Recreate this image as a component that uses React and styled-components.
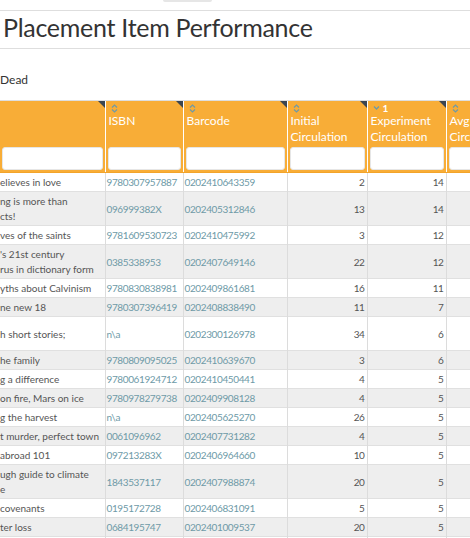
import React from "react";
import styled, { createGlobalStyle } from "styled-components";

const GlobalStyle = createGlobalStyle`
  html, body { margin: 0; padding: 0; background: #fff; overflow: hidden; }
  body { font-family: Lato, "Noto Sans", sans-serif; color: #444; }
  * { box-sizing: border-box; }
`;

const Page = styled.div`
  width: 470px;
  height: 538px;
  overflow: hidden;
`;

const TopStub = styled.div`
  margin-left: 163px;
  width: 49px;
  height: 2px;
  background: #e6e6e6;
  border-radius: 0 0 3px 3px;
`;

const TitleBar = styled.div`
  margin-top: 8px;
  border-top: 1px solid #dedede;
  border-bottom: 1px solid #dedede;
  padding: 0 0 4px 3px;
`;

const Title = styled.h1`
  margin: 0;
  font-family: Lato, sans-serif;
  font-weight: 400;
  font-size: 25px;
  letter-spacing: -0.28px;
  line-height: 33px;
  color: #333;
  white-space: nowrap;
`;

const Status = styled.div`
  margin-top: 23px;
  font-size: 12px;
  line-height: 16px;
  color: #333;
`;

const TableClip = styled.div`
  margin-top: 12px;
  overflow: hidden;
  border-top: 1px solid #dedede;
`;

const Table = styled.table`
  border-collapse: collapse;
  table-layout: fixed;
  width: 526px;
  font-size: 10px;
`;

const HeadCell = styled.th`
  position: relative;
  background: #f8ad37;
  vertical-align: top;
  text-align: left;
  padding: 0 2px 2px;
  border-left: 1px solid rgba(255, 255, 255, 0.55);
  border-bottom: 1px solid #f3a42a;
  font-weight: 400;
  &:first-child { border-left: none; }
`;

const Corner = styled.span`
  position: absolute;
  top: 0;
  right: 0;
  width: 0;
  height: 0;
  border-top: 7px solid #3b4550;
  border-left: 7px solid transparent;
`;

const SortRow = styled.div`
  height: 12px;
  display: flex;
  align-items: center;
  gap: 3px;
  padding-left: 3px;
  padding-top: 2px;
`;

const SortRank = styled.span`
  color: #fff;
  font-weight: 700;
  font-size: 10px;
  line-height: 10px;
`;

const HeadLabel = styled.div`
  height: 32px;
  padding-left: 1px;
  font-size: 12px;
  line-height: 16px;
  color: #fff;
  white-space: nowrap;
  overflow: hidden;
`;

const FilterInput = styled.div`
  margin-top: 2px;
  height: 23px;
  background: #fff;
  border: 1px solid #e6e6e6;
  border-radius: 3px;
`;

const Row = styled.tr`
  background: ${(p) => (p.$alt ? "#eeeeee" : "#ffffff")};
  border-bottom: 1px solid #e0e0e0;
`;

const Cell = styled.td`
  height: ${(p) => (p.$tall ? 34 : 19)}px;
  padding: 2px ${(p) => (p.$num ? "2px" : "0")} 1px ${(p) => (p.$first ? "0" : "1px")};
  line-height: 15px;
  vertical-align: middle;
  border-left: 1px solid #dcdcdc;
  text-align: ${(p) => (p.$num ? "right" : "left")};
  color: ${(p) => (p.$link ? "#6e9aa7" : "#555")};
  letter-spacing: ${(p) => (p.$first ? "0" : "-0.38px")};
  white-space: nowrap;
  overflow: hidden;
  &:first-child { border-left: none; }
`;

const SortIcon = ({ active }) =>
  active ? (
    <svg width="7" height="6" viewBox="0 0 7 6">
      <path d="M1 1.5 L3.5 4 L6 1.5" fill="none" stroke="#6e9aa7" strokeWidth="1.3" />
    </svg>
  ) : (
    <svg width="7" height="9" viewBox="0 0 7 9">
      <path d="M1 3.5 L3.5 1 L6 3.5 M1 5.5 L3.5 8 L6 5.5" fill="none" stroke="#6e9aa7" strokeWidth="1.2" />
    </svg>
  );

const columns = [
  { key: "title", label: [""], width: 105, sort: null },
  { key: "isbn", label: ["ISBN"], width: 78, sort: "none" },
  { key: "barcode", label: ["Barcode"], width: 104, sort: "none" },
  { key: "initial", label: ["Initial", "Circulation"], width: 80, sort: "none" },
  { key: "exp", label: ["Experiment", "Circulation"], width: 79, sort: "desc" },
  { key: "avg", label: ["Avg", "Circulation"], width: 80, sort: "none" },
];

const rows = [
  { t: ["elieves in love"], isbn: "9780307957887", bc: "0202410643359", i: 2, e: 14 },
  { t: ["ng is more than", "cts!"], isbn: "096999382X", bc: "0202405312846", i: 13, e: 14 },
  { t: ["ves of the saints"], isbn: "9781609530723", bc: "0202410475992", i: 3, e: 12 },
  { t: ["'s 21st century", "rus in dictionary form"], isbn: "0385338953", bc: "0202407649146", i: 22, e: 12 },
  { t: ["yths about Calvinism"], isbn: "9780830838981", bc: "0202409861681", i: 16, e: 11 },
  { t: ["ne new 18"], isbn: "9780307396419", bc: "0202408838490", i: 11, e: 7 },
  { t: ["h short stories;"], isbn: "n\\a", bc: "0202300126978", i: 34, e: 6, tall: true },
  { t: ["he family"], isbn: "9780809095025", bc: "0202410639670", i: 3, e: 6 },
  { t: ["g a difference"], isbn: "9780061924712", bc: "0202410450441", i: 4, e: 5 },
  { t: [" on fire, Mars on ice"], isbn: "9780978279738", bc: "0202409908128", i: 4, e: 5 },
  { t: ["g the harvest"], isbn: "n\\a", bc: "0202405625270", i: 26, e: 5 },
  { t: ["t murder, perfect town"], isbn: "0061096962", bc: "0202407731282", i: 4, e: 5 },
  { t: ["abroad 101"], isbn: "097213283X", bc: "0202406964660", i: 10, e: 5 },
  { t: ["ugh guide to climate", "e"], isbn: "1843537117", bc: "0202407988874", i: 20, e: 5 },
  { t: ["covenants"], isbn: "0195172728", bc: "0202406831091", i: 5, e: 5 },
  { t: ["ter loss"], isbn: "0684195747", bc: "0202401009537", i: 20, e: 5 },
  { t: ["the world"], isbn: "9780307386571", bc: "0202408112345", i: 7, e: 4 },
];

export default function App() {
  return (
    <Page>
      <GlobalStyle />
      <TopStub />
      <TitleBar>
        <Title>Placement Item Performance</Title>
      </TitleBar>
      <Status>Dead</Status>
      <TableClip>
        <Table>
          <colgroup>
            {columns.map((c) => (
              <col key={c.key} style={{ width: c.width }} />
            ))}
          </colgroup>
          <thead>
            <tr>
              {columns.map((c) => (
                <HeadCell key={c.key}>
                  <Corner />
                  <SortRow>
                    {c.sort === "none" && <SortIcon />}
                    {c.sort === "desc" && (
                      <>
                        <SortIcon active />
                        <SortRank>1</SortRank>
                      </>
                    )}
                  </SortRow>
                  <HeadLabel>
                    {c.label.map((l, i) => (
                      <div key={i}>{l}</div>
                    ))}
                  </HeadLabel>
                  <FilterInput />
                </HeadCell>
              ))}
            </tr>
          </thead>
          <tbody>
            {rows.map((r, idx) => {
              const tall = r.tall || r.t.length > 1;
              return (
                <Row key={idx} $alt={idx % 2 === 1}>
                  <Cell $first $tall={tall}>
                    {r.t.map((l, i) => (
                      <div key={i}>{l}</div>
                    ))}
                  </Cell>
                  <Cell $link $tall={tall}>{r.isbn}</Cell>
                  <Cell $link $tall={tall}>{r.bc}</Cell>
                  <Cell $num $tall={tall}>{r.i}</Cell>
                  <Cell $num $tall={tall}>{r.e}</Cell>
                  <Cell $num $tall={tall}></Cell>
                </Row>
              );
            })}
          </tbody>
        </Table>
      </TableClip>
    </Page>
  );
}
